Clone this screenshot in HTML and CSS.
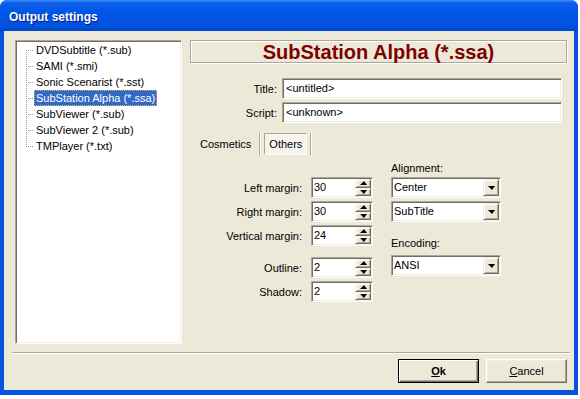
FILE: index.html
```html
<!DOCTYPE html>
<html lang="en">
<head>
    <meta charset="UTF-8">
    <title>Output settings</title>
    <link rel="stylesheet" href="styles.css">
</head>
<body>

<div class="window">
    <div class="titlebar">
        <span class="caption">Output settings</span>
    </div>

    <div class="client">
        <div class="main">

            <div class="tree sunken">
                <div class="node first"><span class="branch"></span><span class="label">DVDSubtitle (*.sub)</span></div>
                <div class="node"><span class="branch"></span><span class="label">SAMI (*.smi)</span></div>
                <div class="node"><span class="branch"></span><span class="label">Sonic Scenarist (*.sst)</span></div>
                <div class="node"><span class="branch"></span><span class="label selected">SubStation Alpha (*.ssa)</span></div>
                <div class="node"><span class="branch"></span><span class="label">SubViewer (*.sub)</span></div>
                <div class="node"><span class="branch"></span><span class="label">SubViewer 2 (*.sub)</span></div>
                <div class="node last"><span class="branch"></span><span class="label">TMPlayer (*.txt)</span></div>
            </div>

            <div class="panel">
                <div class="banner">SubStation Alpha (*.ssa)</div>

                <div class="fields">
                    <label>Title:</label>
                    <div class="edit sunken">&lt;untitled&gt;</div>
                    <label>Script:</label>
                    <div class="edit sunken">&lt;unknown&gt;</div>
                </div>

                <div class="toolbar">
                    <span class="tool">Cosmetics</span>
                    <span class="sep"></span>
                    <span class="tool checked">Others</span>
                    <span class="sep"></span>
                </div>

                <div class="options">
                    <div class="margins">
                        <div class="row">
                            <label>Left margin:</label>
                            <div class="spin sunken"><span class="value">30</span><span class="arrows"><span class="up"></span><span class="down"></span></span></div>
                        </div>
                        <div class="row">
                            <label>Right margin:</label>
                            <div class="spin sunken"><span class="value">30</span><span class="arrows"><span class="up"></span><span class="down"></span></span></div>
                        </div>
                        <div class="row">
                            <label>Vertical margin:</label>
                            <div class="spin sunken"><span class="value">24</span><span class="arrows"><span class="up"></span><span class="down"></span></span></div>
                        </div>
                        <div class="row apart">
                            <label>Outline:</label>
                            <div class="spin sunken"><span class="value">2</span><span class="arrows"><span class="up"></span><span class="down"></span></span></div>
                        </div>
                        <div class="row">
                            <label>Shadow:</label>
                            <div class="spin sunken"><span class="value">2</span><span class="arrows"><span class="up"></span><span class="down"></span></span></div>
                        </div>
                    </div>

                    <div class="choices">
                        <div class="heading">Alignment:</div>
                        <div class="combo sunken"><span class="value">Center</span><span class="drop"></span></div>
                        <div class="combo sunken next"><span class="value">SubTitle</span><span class="drop"></span></div>
                        <div class="heading enc">Encoding:</div>
                        <div class="combo sunken"><span class="value">ANSI</span><span class="drop"></span></div>
                    </div>
                </div>
            </div>

        </div>

        <div class="divider"></div>

        <div class="buttons">
            <button class="btn default"><u>O</u>k</button>
            <button class="btn"><u>C</u>ancel</button>
        </div>
    </div>
</div>

</body>
</html>
```

FILE: styles.css
```css
* {
    box-sizing: border-box;
}

body {
    margin: 0;
    background: #fff;
    font-family: "Liberation Sans", Arial, sans-serif;
    font-size: 11px;
    color: #000;
}

.window {
    width: 578px;
    height: 395px;
    display: flex;
    flex-direction: column;
    background: #0553e0;
    border-radius: 7px 7px 0 0;
}

.titlebar {
    height: 31px;
    padding: 3px 0 0 9px;
    display: flex;
    align-items: center;
    border-radius: 7px 7px 0 0;
    background: linear-gradient(#3d8ff8 0, #0a5fe9 3px, #0056e6 40%, #0051de 85%, #0045cc 100%);
}

.caption {
    color: #fff;
    font-size: 12px;
    font-weight: bold;
    text-shadow: 1px 1px #0a1883;
}

.client {
    flex: 1;
    margin: 0 4px 5px 4px;
    padding: 9px 7px 0 11px;
    display: flex;
    flex-direction: column;
    background: #ece9d8;
}

/* classic 3d borders */
.sunken {
    border: 1px solid;
    border-color: #aca899 #fff #fff #aca899;
    box-shadow: inset 1px 1px #716f64, inset -1px -1px #f1efe2;
    background: #fff;
}

.main {
    display: flex;
    gap: 8px;
    height: 304px;
}

/* tree list */
.tree {
    width: 167px;
    padding: 1px;
}

.node {
    display: flex;
    height: 16px;
    align-items: center;
}

.branch {
    width: 8px;
    height: 16px;
    margin-left: 9px;
    background:
        repeating-linear-gradient(to right, #9c9c9c 0 1px, transparent 1px 2px) 0 8px / 8px 1px no-repeat,
        repeating-linear-gradient(to bottom, #9c9c9c 0 1px, transparent 1px 2px) 0 0 / 1px 16px no-repeat;
}

.node.first .branch {
    background:
        repeating-linear-gradient(to right, #9c9c9c 0 1px, transparent 1px 2px) 0 8px / 8px 1px no-repeat,
        repeating-linear-gradient(to bottom, #9c9c9c 0 1px, transparent 1px 2px) 0 8px / 1px 8px no-repeat;
}

.node.last .branch {
    background:
        repeating-linear-gradient(to right, #9c9c9c 0 1px, transparent 1px 2px) 0 8px / 8px 1px no-repeat,
        repeating-linear-gradient(to bottom, #9c9c9c 0 1px, transparent 1px 2px) 0 0 / 1px 9px no-repeat;
}

.label {
    height: 16px;
    line-height: 16px;
    padding: 0 2px;
    white-space: nowrap;
}

.label.selected {
    background: #316ac5;
    color: #fff;
    outline: 1px dotted #d8b470;
    outline-offset: -1px;
}

/* right side */
.panel {
    width: 377px;
    display: flex;
    flex-direction: column;
}

.banner {
    height: 23px;
    padding-top: 1px;
    line-height: 21px;
    text-align: center;
    font-size: 20px;
    font-weight: bold;
    color: #800000;
    border: 1px solid #aca899;
    box-shadow: inset 1px 1px #fff, 1px 1px #fff;
}

.fields {
    display: grid;
    grid-template-columns: 87px 280px;
    column-gap: 5px;
    row-gap: 3px;
    margin-top: 15px;
}

.fields label {
    text-align: right;
    align-self: center;
}

.edit {
    height: 21px;
    padding-left: 3px;
    line-height: 19px;
}

.toolbar {
    display: flex;
    height: 22px;
    margin-top: 10px;
    padding-left: 5px;
}

.tool {
    padding: 0 4px;
    line-height: 20px;
    border: 1px solid transparent;
}

.tool.checked {
    border-color: #aca899 #fff #fff #aca899;
    background: #f5f4ee;
}

.sep {
    width: 2px;
    margin: 0 3px;
    border-left: 1px solid #aca899;
    border-right: 1px solid #fff;
}

.options {
    display: flex;
}

.margins {
    width: 183px;
    margin-top: 22px;
    display: flex;
    flex-direction: column;
    gap: 3px;
}

.row {
    display: flex;
    align-items: center;
    height: 21px;
}

.row.apart {
    margin-top: 8px;
}

.row label {
    width: 112px;
    margin-right: 9px;
    text-align: right;
}

.spin {
    width: 62px;
    height: 21px;
    display: flex;
}

.value {
    flex: 1;
    padding-left: 2px;
    line-height: 19px;
}

.arrows {
    width: 16px;
    margin: 1px;
    display: flex;
    flex-direction: column;
}

.up, .down, .drop {
    display: flex;
    align-items: center;
    justify-content: center;
    background: #ece9d8;
    border: 1px solid;
    border-color: #f1efe2 #716f64 #716f64 #f1efe2;
    box-shadow: inset 1px 1px #fff, inset -1px -1px #aca899;
}

.up, .down {
    flex: 1;
}

.up::after {
    content: "";
    border-left: 4px solid transparent;
    border-right: 3px solid transparent;
    border-bottom: 4px solid #000;
}

.down::after {
    content: "";
    border-left: 4px solid transparent;
    border-right: 3px solid transparent;
    border-top: 4px solid #000;
}

.choices {
    width: 110px;
    margin: 5px 0 0 18px;
    display: flex;
    flex-direction: column;
}

.heading {
    line-height: 16px;
}

.heading.enc {
    margin-top: 13px;
}

.combo {
    height: 21px;
    margin-top: 1px;
    display: flex;
}

.combo.next {
    margin-top: 3px;
}

.heading.enc + .combo {
    margin-top: 4px;
}

.drop {
    width: 16px;
    margin: 1px;
}

.drop::after {
    content: "";
    border-left: 4px solid transparent;
    border-right: 3px solid transparent;
    border-top: 4px solid #000;
}

/* bottom */
.divider {
    height: 2px;
    margin: 8px -3px 0 -3px;
    border-top: 1px solid #aca899;
    border-bottom: 1px solid #fff;
}

.buttons {
    display: flex;
    justify-content: flex-end;
    gap: 7px;
    margin-top: 5px;
}

.btn {
    width: 81px;
    height: 24px;
    padding: 0;
    font: inherit;
    color: #000;
    background: #ece9d8;
    border: 1px solid;
    border-color: #fff #716f64 #716f64 #fff;
    box-shadow: inset -1px -1px #aca899, inset 1px 1px #f1efe2;
}

.btn.default {
    font-weight: bold;
    border-color: #000;
    box-shadow: inset 1px 1px #fff, inset -1px -1px #716f64, inset -2px -2px #aca899;
}
```
